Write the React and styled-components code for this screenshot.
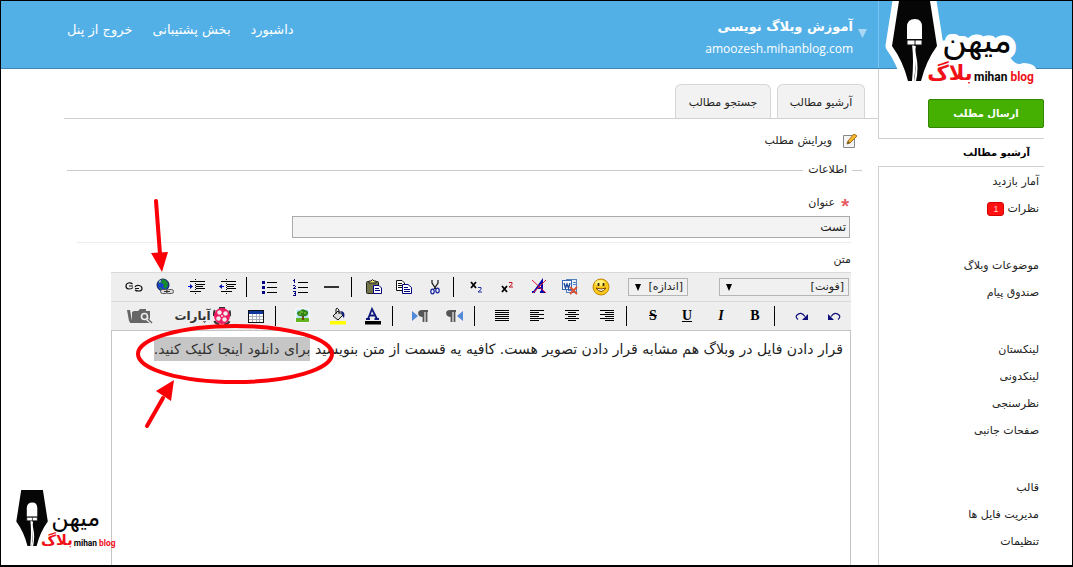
import React from "react";
import styled, { createGlobalStyle } from "styled-components";

const Global = createGlobalStyle`
  *, *::before, *::after { box-sizing: border-box; }
  body {
    margin: 0;
    background: #fff;
    color: #222;
    font: 11px/16px "DejaVu Sans", sans-serif;
  }
  a { color: inherit; text-decoration: none; }
  button, input, select { font: inherit; color: inherit; }
`;

const Page = styled.div`
  position: relative;
  display: flex;
  flex-direction: column;
  height: 100vh;
  overflow: hidden;
  border: solid #000;
  border-width: 1px 1px 2px 1px;
`;

const Header = styled.header`
  display: flex;
  height: 68px;
  flex: none;
  padding: 0 28px 0 66px;
  background: #52b0e7;
  border-bottom: 1px solid #3f86b4;
  color: #fff;
`;

const TopNav = styled.nav`
  display: flex;
  flex: 1;
  gap: 20px;
  justify-content: flex-end;
  align-items: flex-start;
  padding-top: 19px;
  font-size: 13px;
  line-height: 20px;
`;

const Blog = styled.div`
  display: flex;
  gap: 5px;
  padding: 14px 11px 0 0;
`;

const BlogName = styled.div`
  font-weight: bold;
  font-size: 13px;
  line-height: 24px;
`;

const BlogAddress = styled.a`
  display: block;
  direction: ltr;
  font: 12px/20px "Open Sans", "Noto Sans", sans-serif;
  text-align: right;
`;

const MenuArrow = styled.button`
  align-self: flex-start;
  margin-top: 14px;
  padding: 0;
  border: 0;
  background: none;
  svg { display: block; }
`;

const LogoColumn = styled.div`
  width: 166px;
  border-left: 1px solid #7cc4ee;
`;

const LogoLink = styled.a`
  position: absolute;
  z-index: 2;
  top: 0;
  right: 34px;
`;

const FooterLogo = styled.div`
  position: absolute;
  left: 9px;
  bottom: 12px;
  line-height: 0;
`;

const Columns = styled.div`
  display: flex;
  flex: 1;
  min-height: 0;
  padding: 0 28px 0 63px;
`;

const Sidebar = styled.aside`
  display: flex;
  flex-direction: column;
  width: 166px;
  flex: none;
`;

const PostArea = styled.div`
  height: 70px;
  padding-top: 30px;
  border: solid #d0d0d0;
  border-width: 0 0 1px 1px;
`;

const PostButton = styled.button`
  display: block;
  width: 116px;
  height: 29px;
  padding: 0;
  border: 1px solid #348500;
  border-radius: 2px;
  background: #45b002;
  color: #fff;
  font-size: 10px;
  font-weight: bold;
`;

const ActiveLink = styled.a`
  display: block;
  height: 27px;
  padding: 6px 14px 0 0;
  color: #000;
  font-size: 10px;
  font-weight: bold;
`;

const SideMenu = styled.nav`
  display: flex;
  flex: 1;
  flex-direction: column;
  gap: 30px;
  padding: 1px 5px 0 0;
  border: solid #d0d0d0;
  border-width: 1px 0 0 1px;
`;

const SideGroup = styled.div`
  display: flex;
  flex-direction: column;
`;

const SideLink = styled.a`
  display: flex;
  align-items: center;
  gap: 3px;
  height: 27px;
`;

const Badge = styled.span`
  width: 17px;
  height: 14px;
  border: 1px solid #d40000;
  border-radius: 3px;
  background: #f11;
  color: #ffd0d0;
  font: 9px/12px "Liberation Sans", sans-serif;
  text-align: center;
`;

const Main = styled.main`
  display: flex;
  flex: 1;
  flex-direction: column;
  min-width: 0;
`;

const Tabs = styled.nav`
  display: flex;
  gap: 6px;
  height: 50px;
  flex: none;
  padding: 15px 13px 0 0;
  border-bottom: 1px solid #d0d0d0;
`;

const Tab = styled.a`
  width: ${(p) => p.$width}px;
  padding-top: 10px;
  border: 1px solid #d6d6d6;
  border-bottom: 0;
  border-radius: 6px 6px 0 0;
  background: #f2f2f2;
  text-align: center;
`;

const PageTitle = styled.h1`
  display: flex;
  align-items: center;
  gap: 10px;
  height: 20px;
  margin: 12px 20px 0 0;
  font-size: 11px;
  font-weight: normal;
`;

const Details = styled.fieldset`
  display: flex;
  flex: 1;
  flex-direction: column;
  min-width: 0;
  min-height: 0;
  margin: 11px 16px 0 3px;
  padding: 0 11px 0 44px;
  border: 0;
  border-top: 1px solid #c9c9c9;
  legend { margin-right: -1px; padding: 0 5px; }
`;

const TitleField = styled.div`
  display: flex;
  flex-direction: column;
  height: 65px;
  flex: none;
  margin-left: -34px;
  padding-top: 17px;
  border-bottom: 1px solid #ececec;
`;

const FieldLabel = styled.label`
  display: flex;
  align-items: center;
  gap: 5px;
  height: 16px;
  flex: none;
  ${(p) => p.$required && `&::before {
    content: "*";
    width: 9px;
    height: 16px;
    margin-right: 2px;
    color: #e85a64;
    font: bold 20px/22px "Liberation Sans", sans-serif;
  }`}
`;

const TitleInput = styled.input`
  width: 558px;
  max-width: 100%;
  height: 22px;
  margin: 5px 1px 0 0;
  padding: 0 3px;
  border: 1px solid #aaa;
  background: #f3f3f3;
  font-size: 12px;
`;

const BodyField = styled.div`
  display: flex;
  flex: 1;
  flex-direction: column;
  min-height: 0;
  padding-top: 9px;
`;

const Editor = styled.div`
  display: flex;
  flex: 1;
  flex-direction: column;
  margin-top: 4px;
`;

const ToolRow = styled.div`
  display: flex;
  align-items: center;
  direction: ltr;
  height: 29px;
  flex: none;
  padding-left: ${(p) => p.$inset || 1}px;
  border-top: 1px solid #d9d9d9;
  background: #eee;
`;

const ToolButton = styled.button`
  display: flex;
  align-items: center;
  justify-content: center;
  width: ${(p) => p.$width}px;
  height: 26px;
  flex: none;
  padding: 0;
  border: 0;
  background: none;
  color: #000;
`;

const Divider = styled.span`
  width: 1px;
  height: 20px;
  flex: none;
  margin: ${(p) => (p.$wide ? "0 9px 0 2px" : "0 7px 0 4px")};
  background: #000;
`;

const Letter = styled.span`
  font: bold 14px/18px "Liberation Serif", serif;
  font-style: ${(p) => (p.$italic ? "italic" : "normal")};
  text-decoration: ${(p) => p.$line || "none"};
`;

const SelectBox = styled.span`
  display: grid;
  align-items: center;
  width: ${(p) => p.$width}px;
  flex: none;
  margin-left: ${(p) => p.$before}px;
  > * { grid-area: 1 / 1; }
  svg { margin-left: 6px; pointer-events: none; }
`;

const Select = styled.select`
  appearance: none;
  direction: rtl;
  width: 100%;
  height: 18px;
  padding: 0 4px;
  border: 1px solid #b5b5b5;
  border-radius: 0;
  background: #f0f0f0;
  font-size: 11px;
  line-height: 16px;
`;

const Canvas = styled.div`
  flex: 1;
  padding: 5px 7px;
  border: 1px solid #c4c4c4;
  border-bottom: 0;
  background: #fff;
  font-size: 14px;
  line-height: 26px;
  white-space: nowrap;
`;

const Selection = styled.mark`
  padding: 4px 0;
  background: #c6c6c6;
  color: #333;
`;

const Annotations = styled.svg`
  position: absolute;
  top: -1px;
  left: -1px;
  z-index: 3;
  pointer-events: none;
`;

/* Pen nib with the brand name, drawn on a 155 x 90 field. */
const NIB = "M16 0 H47 L54 45 Q43 60 38 80 H31 Q34 60 31 43 H29 Q31 60 29 80 H25 Q20 60 9 45 Z";

function Logo({ halo, scale = 1 }) {
  const outline = (width) =>
    halo ? { stroke: "#fff", strokeWidth: width, strokeLinejoin: "round", paintOrder: "stroke" } : {};
  const word = (size) => ({ fontSize: size, fontFamily: "DejaVu Sans, sans-serif", textAnchor: "middle" });
  return (
    <svg width={155 * scale} height={90 * scale} viewBox="0 0 155 90" direction="ltr" role="img" aria-label="mihan blog">
      {halo && (
        <g fill="#fff">
          <path d={NIB} {...outline(13)} />
          <path d="M50 54 H126 Q132 66 140 62 Q154 62 154 72 V90 H46Z" />
        </g>
      )}
      <text x="94" y="51" fill="#060606" {...word(34)} {...outline(13)}>میهن</text>
      <text x="91" y="80" fill="#060606" fontSize="12" fontWeight="bold" fontFamily="Roboto, Liberation Sans, sans-serif">
        mihan <tspan fill="#f01018">blog</tspan>
      </text>
      <path d={NIB} fill="#060606" />
      <path d="M24 38 V26 Q24 18 32 18 Q39 18 39 26 V38 Z" fill="#fff" />
      <path d="M24 39 H39 V44 H24 Z M32 39 V44" fill="#fff" stroke="#111" />
      <path d="M32 45 C29 54 37 58 32 80" fill="none" stroke="#fff" strokeWidth="2" />
      <text x="67" y="79" fill="#f01018" fontWeight="bold" {...word(21)}>بلاگ</text>
    </svg>
  );
}

const Glyph = ({ w = 18, h = 18, children, label }) => (
  <svg width={w} height={h} viewBox={`0 0 ${w} ${h}`} fill="none" aria-label={label}>{children}</svg>
);

const Lines = ({ rows, x = 2 }) => (
  <g stroke="#000" shapeRendering="crispEdges">
    {rows.map(([a, b, y]) => <path key={y} d={`M${a + x} ${y}.5 H${b + x}`} />)}
  </g>
);

const indentRows = [[3, 18, 3], [9, 18, 6], [9, 16, 8], [9, 18, 10], [3, 14, 13]];

const icons = {
  unlink: (
    <Glyph>
      <g stroke="#111" strokeWidth="1.2">
        <path d="M7.5 6 Q6 4.500 3.500 5 Q1 5.500 1 8 Q1 11 4 11 Q7 11 8 9.500 M4 8 H8 M10 9 Q11 7 14 7.500 Q17 8 17 10.500 Q17 13 14 13 Q11 13 10 12 M10 10.500 H14" />
      </g>
    </Glyph>
  ),
  link: (
    <Glyph>
      <circle cx="7" cy="7" r="6" fill="#183fd0" stroke="#16204e" />
      <path d="M6 1 Q12 2 12 7 L10 11 L7 9 L8 6 L5 5Z M2 4 L5 3 L4 6Z M3 9 L6 10 L5 12Z" fill="#168b28" />
      <path d="M3 3 L5 2 L4 5Z" fill="#eef" />
      <g stroke="#555" fill="#ddd"><rect x="4.500" y="11.500" width="7" height="4" rx="2" /><rect x="10.500" y="11.500" width="7" height="4" rx="2" /><path d="M8 13.500 H14" stroke="#333" /></g>
    </Glyph>
  ),
  outdent: (
    <Glyph>
      <Lines x={0} rows={indentRows} />
      <path d="M8.500 1 V17" stroke="#000" strokeDasharray="1 1" />
      <path d="M1 8.500 H4" stroke="#00f" /><path d="M3 6 L6 8.500 L3 11Z" fill="#0010a0" />
    </Glyph>
  ),
  indent: (
    <Glyph>
      <Lines x={0} rows={indentRows} />
      <path d="M8.500 1 V17" stroke="#000" strokeDasharray="1 1" />
      <path d="M3 8.500 H6" stroke="#00f" /><path d="M4 6 L1 8.500 L4 11Z" fill="#0010a0" />
    </Glyph>
  ),
  bullets: (
    <Glyph>
      <Lines x={0} rows={[[6, 16, 4], [6, 16, 9], [6, 16, 14]]} />
      <path d="M1 3 h3 v3 h-3z M1 8 h3 v3 h-3z M1 13 h3 v3 h-3z" fill="#000080" />
    </Glyph>
  ),
  numbers: (
    <Glyph>
      <Lines x={0} rows={[[6, 16, 4], [6, 16, 9], [6, 16, 14]]} />
      <g stroke="#000080" shapeRendering="crispEdges">
        <path d="M2.500 1 V5 M1 2.500 H2 M1 7.500 H3 M3 8.500 H4 M2 9.500 H3 M1 10.500 H4 M1 13.500 H4 M2 15.500 H4 M1 17.500 H4 M3.500 13 V17" />
      </g>
    </Glyph>
  ),
  rule: <Glyph><path d="M1 9 H16" stroke="#333" strokeWidth="2" shapeRendering="crispEdges" /></Glyph>,
  paste: (
    <Glyph>
      <rect x="1.500" y="3.500" width="12" height="12" rx="1" fill="#74744a" stroke="#222" />
      <path d="M4 5 V3 H6 Q7.500 0 9 3 H11 V5Z" fill="#e8e06a" stroke="#222" />
      <path d="M8.500 7.500 H14 L16.500 10 V15.500 H8.500Z" fill="#fff" stroke="#000080" /><path d="M10 10.500 h4 M10 12.500 h5" stroke="#000080" />
    </Glyph>
  ),
  copy: (
    <Glyph>
      <path d="M1.500 2.500 H7 L9.500 5 V12.500 H1.500Z" fill="#fff" stroke="#111" /><path d="M3 5.500 h4 M3 7.500 h4 M3 9.500 h4" stroke="#111" />
      <path d="M7.500 6.500 H13 L16.500 9.500 V15.500 H7.500Z" fill="#fff" stroke="#000080" /><path d="M9 9.500 h4 M9 11.500 h6 M9 13.500 h6" stroke="#000080" />
    </Glyph>
  ),
  cut: (
    <Glyph>
      <path d="M7 2 V5 L11 11 M13 2 V5 L9 11" stroke="#111" strokeWidth="1.200" />
      <ellipse cx="7.500" cy="13.500" rx="1.700" ry="2.300" stroke="#1020a0" strokeWidth="1.200" /><ellipse cx="12.500" cy="12.500" rx="1.700" ry="2.300" stroke="#1020a0" strokeWidth="1.200" />
    </Glyph>
  ),
  sub: <Glyph><path d="M3 4 L8 10 M8 4 L3 10" stroke="#000" strokeWidth="1.800" /><path d="M10 9.500 h3 v2 l-3 2.500 h4" stroke="#2030a0" /></Glyph>,
  sup: <Glyph><path d="M3 8 L8 14 M8 8 L3 14" stroke="#000" strokeWidth="1.800" /><path d="M10 4.500 h3 v2 l-3 2.500 h4" stroke="#c01020" /></Glyph>,
  clear: (
    <Glyph>
      <path d="M2 14 H5 M4 14 L12 3 L12 14 M7 10 H12 M10 14 H15" stroke="#0808b0" strokeWidth="2" />
      <path d="M2 2 L16 15 M16 2 L3 15" stroke="#e01830" />
    </Glyph>
  ),
  word: (
    <Glyph>
      <rect x="5.500" y="1.500" width="10" height="13" fill="#e6effb" stroke="#5680bc" /><path d="M12 4.500 h3 M12 6.500 h3 M7 12.500 h6" stroke="#5680bc" />
      <rect x="1.500" y="2.500" width="9" height="9" fill="#fff" stroke="#3468b4" /><path d="M3 5 L4.500 10 L6 6 L7.500 10 L9 5" stroke="#1d4c9c" strokeWidth="1.400" />
      <path d="M9 9 L16 16 M16 9 L9 16" stroke="#e05030" strokeWidth="1.800" />
    </Glyph>
  ),
  smile: (
    <Glyph>
      <circle cx="9" cy="9" r="8" fill="#f9ca1c" stroke="#c28805" /><ellipse cx="8" cy="5" rx="5" ry="3" fill="#fff07a" />
      <path d="M6.500 5 V8 M11.500 5 V8" stroke="#3b2600" strokeWidth="1.800" /><path d="M4 10 Q9 17 14 10 Q9 12 4 10Z" fill="#fff" stroke="#7a4300" />
    </Glyph>
  ),
  folder: (
    <Glyph w={28} h={18}>
      <path d="M1 3 H4 L6 14 H3Z M6 14 V5 L8 4 H12 L14 2 H20 V4 H24 V15 H6Z M3 13 H24 V16 H4Z" fill="#666" />
      <circle cx="18.500" cy="9.500" r="3" stroke="#eee" strokeWidth="1.600" /><path d="M21 12 L26 16" stroke="#eee" strokeWidth="3" /><path d="M22 12 L26 16" stroke="#666" strokeWidth="1.500" />
    </Glyph>
  ),
  reel: (
    <Glyph w={20} h={20}>
      <rect x="2" y="2" width="16" height="16" rx="5" stroke="#333" strokeWidth="2" strokeDasharray="6 5" />
      <circle cx="10" cy="10" r="8" fill="#ef1b61" />
      <g fill="#eee"><circle cx="7.500" cy="6.500" r="2.200" /><circle cx="13.500" cy="7.500" r="2.200" /><circle cx="6.500" cy="12.500" r="2.200" /><circle cx="12.500" cy="13.500" r="2.200" /><circle cx="10" cy="10" r="1" /></g>
    </Glyph>
  ),
  table: (
    <Glyph>
      <g shapeRendering="crispEdges"><path d="M1.500 3.500 H16.500 V15.500 H1.500Z" fill="#fff" stroke="#111" /><path d="M2 4 H16 V7 H2Z" fill="#10389c" /><path d="M2 9.500 H16 M2 12.500 H16 M5.500 7 V15 M9.500 7 V15 M12.500 7 V15" stroke="#a8b0bc" /></g>
    </Glyph>
  ),
  picture: (
    <Glyph>
      <path d="M2 2 H15 V15 H2Z" fill="#b5e0fa" stroke="#fff" /><path d="M2 11 H15 V15 H2Z" fill="#63b51e" /><path d="M8 8 h2 v5 h-2z" fill="#754612" />
      <path d="M3 7 Q3 4 6 4 Q8 1 11 3 Q15 4 14 7 Q12 10 9 9 Q5 10 3 7Z" fill="#2c8415" /><path d="M6 5 h3 M10 6 h2 M5 7 h2" stroke="#a4d43d" />
    </Glyph>
  ),
  fill: (
    <Glyph>
      <path d="M1 14 H17 V17.500 H1Z" fill="#ff0" /><path d="M4 9 L9 4 L14 8 L9 13Z" fill="#ddd" stroke="#111" /><path d="M7 7 V2 Q8 0 10 3 V7" stroke="#111" />
      <path d="M11 4 Q17 4 15 11 Q13 10 14 8Z" fill="#0c1c80" />
    </Glyph>
  ),
  color: (
    <Glyph>
      <path d="M1 14 H17 V17.500 H1Z" fill="#000" /><path d="M2 12 H6 M4 12 L8 2 L13 12 M6 8.500 H11 M10.500 12 H15" stroke="#10187c" strokeWidth="1.800" />
    </Glyph>
  ),
  ltr: <Glyph><path d="M1 4 L7 9 L1 14Z" fill="#5289d8" /><path d="M12 9 Q8 9 8 6 Q8 4 11 4 H17 M12.500 4 V15 M15.500 4 V15" stroke="#555" strokeWidth="1.800" /><path d="M9 4 H12 V8 H9Z" fill="#555" /></Glyph>,
  rtl: <Glyph><path d="M17 4 L11 9 L17 14Z" fill="#5289d8" /><path d="M5 9 Q1 9 1 6 Q1 4 4 4 H10 M5.500 4 V15 M8.500 4 V15" stroke="#555" strokeWidth="1.800" /><path d="M2 4 H5 V8 H2Z" fill="#555" /></Glyph>,
  justify: <Glyph><Lines rows={[3, 5, 7, 9, 11, 13].map((y) => [0, 14, y])} /></Glyph>,
  left: <Glyph><Lines rows={[3, 5, 7, 9, 11, 13].map((y, i) => [0, i % 2 ? 9 : 14, y])} /></Glyph>,
  center: <Glyph><Lines rows={[3, 5, 7, 9, 11, 13].map((y, i) => (i % 2 ? [3, 11, y] : [0, 14, y]))} /></Glyph>,
  right: <Glyph><Lines rows={[3, 5, 7, 9, 11, 13].map((y, i) => [i % 2 ? 5 : 0, 14, y])} /></Glyph>,
  strike: <Letter $line="line-through">S</Letter>,
  underline: <Letter $line="underline">U</Letter>,
  italic: <Letter $italic>I</Letter>,
  bold: <Letter>B</Letter>,
  redo: <Glyph><path d="M6 12.500 Q3 10 5 8 Q9 4 13 9.500" stroke="#10107c" strokeWidth="1.200" /><path d="M16 7 V13 H10Z" fill="#10107c" /></Glyph>,
  undo: <Glyph><path d="M12 12.500 Q15 10 13 8 Q9 4 5 9.500" stroke="#10107c" strokeWidth="1.200" /><path d="M2 7 V13 H8Z" fill="#10107c" /></Glyph>,
};

const Aparat = styled.span`
  display: flex;
  align-items: center;
  gap: 1px;
  color: #333;
  font-size: 12px;
  font-weight: bold;
  line-height: 20px;
`;

const Tools = ({ names, width }) =>
  names.map((name) => (
    <ToolButton key={name} type="button" $width={width} aria-label={name}>{icons[name]}</ToolButton>
  ));

const Picker = ({ label, width, before }) => (
  <SelectBox $width={width} $before={before}>
    <Select aria-label={label}><option>[{label}]</option></Select>
    <svg width="8" height="7" viewBox="0 0 8 7" aria-hidden="true"><path d="M1 0 H7 L4 7Z" fill="#000" /></svg>
  </SelectBox>
);

const sideGroups = [
  ["آمار بازدید", "نظرات"],
  ["موضوعات وبلاگ", "صندوق پیام"],
  ["لینکستان", "لینکدونی", "نظرسنجی", "صفحات جانبی"],
  ["قالب", "مدیریت فایل ها", "تنظیمات"],
];

export default function App() {
  return (
    <Page dir="rtl" lang="fa">
      <Global />
      <Header>
        <LogoColumn />
        <Blog>
          <MenuArrow type="button" aria-label="menu">
            <svg width="9" height="9" viewBox="0 0 9 9"><path d="M0 0 H9 L4.500 9Z" fill="#a8d8f4" /></svg>
          </MenuArrow>
          <div>
            <BlogName>آموزش وبلاگ نویسی</BlogName>
            <BlogAddress href="#blog">amoozesh.mihanblog.com</BlogAddress>
          </div>
        </Blog>
        <TopNav>
          <a href="#dashboard">داشبورد</a>
          <a href="#support">بخش پشتیبانی</a>
          <a href="#logout">خروج از پنل</a>
        </TopNav>
      </Header>
      <LogoLink href="#home"><Logo halo /></LogoLink>

      <Columns>
        <Sidebar>
          <PostArea><PostButton type="button">ارسال مطلب</PostButton></PostArea>
          <ActiveLink href="#archive">آرشیو مطالب</ActiveLink>
          <SideMenu>
            {sideGroups.map((group) => (
              <SideGroup key={group[0]}>
                {group.map((item) => (
                  <SideLink key={item} href="#section">
                    {item}
                    {item === "نظرات" && <Badge>1</Badge>}
                  </SideLink>
                ))}
              </SideGroup>
            ))}
          </SideMenu>
        </Sidebar>

        <Main>
          <Tabs>
            <Tab href="#archive" $width={88}>آرشیو مطالب</Tab>
            <Tab href="#search" $width={96}>جستجو مطالب</Tab>
          </Tabs>
          <PageTitle>
            <svg width="16" height="16" viewBox="0 0 16 16">
              <path d="M1.500 2.500 H12.500 V14.500 H1.500Z" fill="#f4f4f4" stroke="#888" />
              <path d="M5 11 L6 8 L12 1 L15 3 L8 10Z" fill="#f5b82e" stroke="#a86c10" /><path d="M5 11 L6 8 L8 10Z" fill="#654" />
            </svg>
            ویرایش مطلب
          </PageTitle>
          <Details>
            <legend>اطلاعات</legend>
            <TitleField>
              <FieldLabel htmlFor="title" $required>عنوان</FieldLabel>
              <TitleInput id="title" defaultValue="تست" />
            </TitleField>
            <BodyField>
              <FieldLabel as="div" id="body-label">متن</FieldLabel>
              <Editor>
                <ToolRow $inset={7}>
                  <Tools width={31} names={["unlink", "link", "outdent", "indent"]} />
                  <Divider />
                  <Tools width={31} names={["bullets", "numbers", "rule"]} />
                  <Divider />
                  <Tools width={30} names={["paste", "copy", "cut"]} />
                  <Divider />
                  <Tools width={31} names={["sub", "sup", "clear", "word", "smile"]} />
                  <Picker label="اندازه" width={60} before={12} />
                  <Picker label="فونت" width={130} before={31} />
                </ToolRow>
                <ToolRow>
                  <Tools width={56} names={["folder"]} />
                  <ToolButton type="button" $width={70}>
                    <Aparat>آپارات{icons.reel}</Aparat>
                  </ToolButton>
                  <Tools width={35} names={["table"]} />
                  <Divider $wide />
                  <Tools width={35} names={["picture", "fill", "color"]} />
                  <Divider $wide />
                  <Tools width={35} names={["ltr", "rtl"]} />
                  <Divider $wide />
                  <Tools width={35} names={["justify", "left", "center", "right"]} />
                  <Divider $wide />
                  <Tools width={34} names={["strike", "underline", "italic", "bold"]} />
                  <Divider $wide />
                  <Tools width={34} names={["redo", "undo"]} />
                </ToolRow>
                <Canvas contentEditable suppressContentEditableWarning role="textbox" aria-labelledby="body-label">
                  قرار دادن فایل در وبلاگ هم مشابه قرار دادن تصویر هست. کافیه یه قسمت از متن بنویسید{" "}
                  <Selection>برای دانلود اینجا کلیک کنید.</Selection>
                </Canvas>
              </Editor>
            </BodyField>
          </Details>
        </Main>
      </Columns>

      <FooterLogo><Logo scale={0.7} /></FooterLogo>

      <Annotations width="360" height="440" viewBox="0 0 360 440" aria-hidden="true">
        <g fill="none" stroke="#fb0007" strokeWidth="4" strokeLinecap="round">
          <path d="M156 201 L160 254" />
          <path d="M147 426 L163 398" />
          <ellipse cx="235" cy="354" rx="97" ry="28" />
        </g>
        <path d="M151 253 L168 252 L162 272Z M156 391 L174 380 L171 401Z" fill="#fb0007" />
      </Annotations>
    </Page>
  );
}
